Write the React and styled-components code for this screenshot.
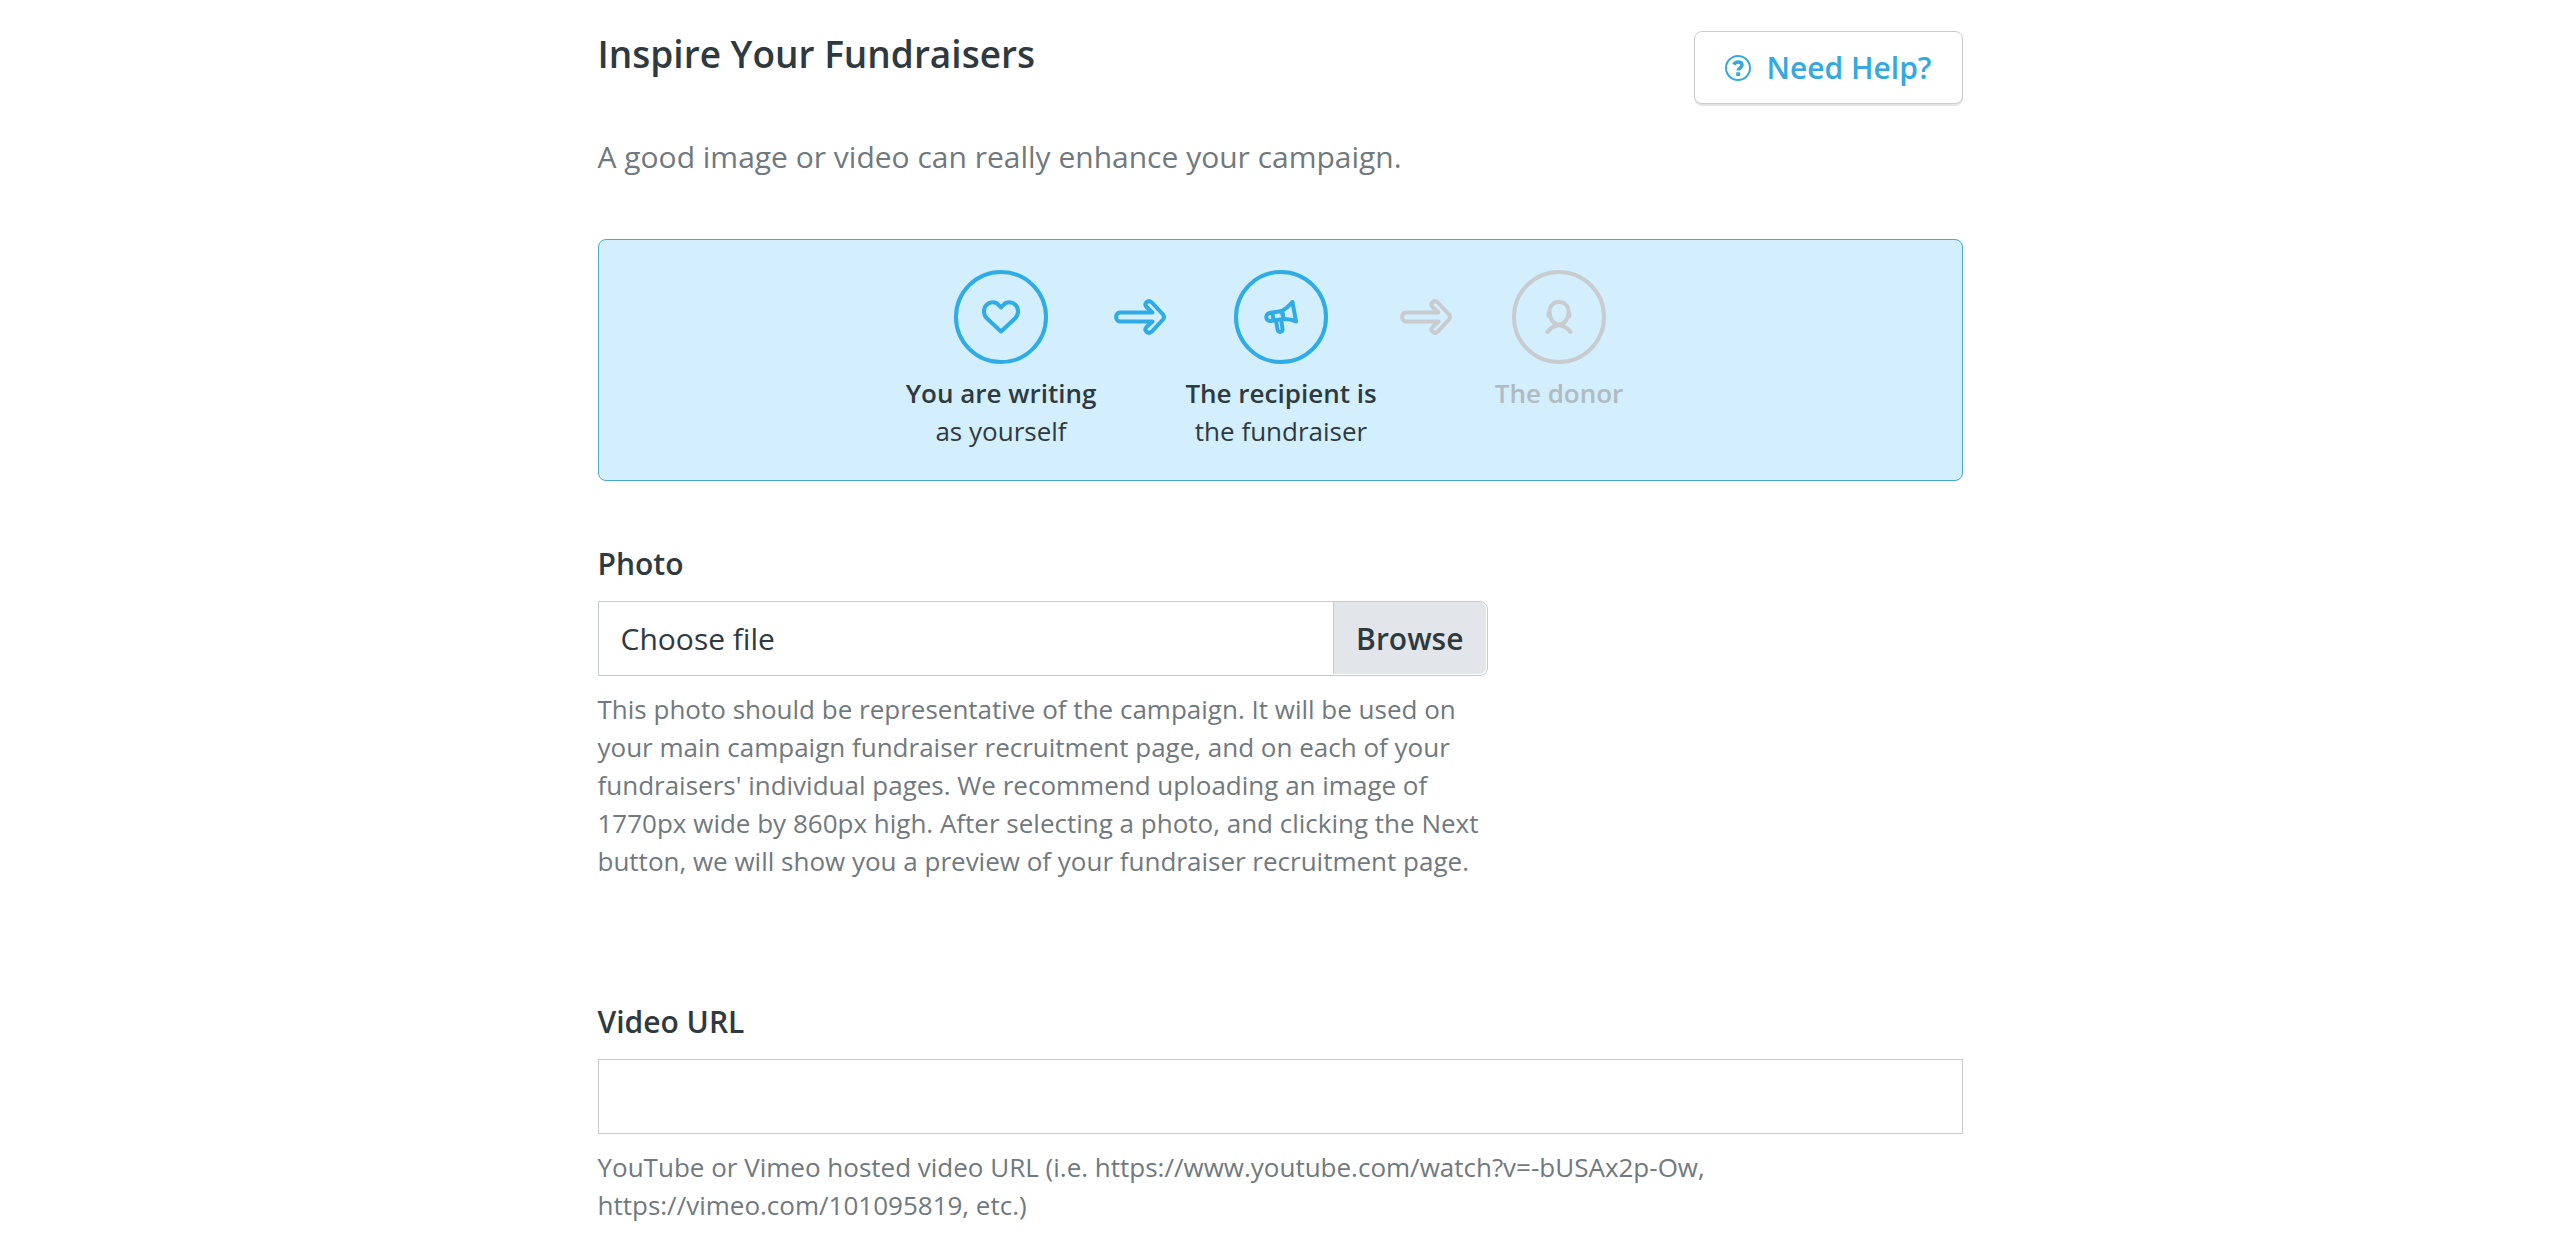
import React from "react";
import styled, { createGlobalStyle } from "styled-components";

const Global = createGlobalStyle`
  *, *::before, *::after { box-sizing: border-box; }
  body {
    margin: 0;
    background: #fff;
    color: #2e3a40;
    font-family: "Open Sans", "Noto Sans", sans-serif;
    font-size: 30px;
    line-height: 45px;
  }
`;

const Page = styled.main`
  max-width: 1365px;
  margin: 0 auto;
  padding: 31px 0 12px;
`;

const Header = styled.header`
  display: flex;
  justify-content: space-between;
  align-items: flex-start;
`;

const Title = styled.h1`
  margin: 0;
  font-size: 37px;
  line-height: 45px;
  font-weight: 600;
`;

const HelpButton = styled.button`
  display: flex;
  align-items: center;
  gap: 15px;
  height: 73px;
  padding: 0 30px;
  border: 1px solid #ccc;
  border-radius: 8px;
  background: #fff;
  box-shadow: 0 2px 0 #e5e5e5;
  color: #33a9e0;
  font: inherit;
  font-weight: 600;
  cursor: pointer;
`;

const Lead = styled.p`
  margin: 30px 0 60px;
  color: #70797d;
`;

const Flow = styled.section`
  display: grid;
  grid-template-columns: 210px 70px 210px 68px 210px;
  justify-content: center;
  padding: 30px 0;
  border: 1px solid #4ba9cc;
  border-radius: 8px;
  background: #d3eefc;
`;

const Step = styled.div`
  display: flex;
  flex-direction: column;
  align-items: center;
  font-size: 26px;
  line-height: 38px;
  text-align: center;
  color: ${(p) => (p.$muted ? "#b0bbc0" : "#2e3a40")};
`;

const Circle = styled.span`
  display: flex;
  align-items: center;
  justify-content: center;
  width: 94px;
  height: 94px;
  margin-bottom: 10px;
  border: 4px solid currentColor;
  border-radius: 50%;
  color: ${(p) => (p.$muted ? "#c8cccf" : "#2fabe6")};
`;

const Strong = styled.strong`
  font-weight: 600;
`;

const ArrowCell = styled.div`
  display: flex;
  align-items: center;
  justify-content: ${(p) => (p.$muted ? "flex-end" : "center")};
  height: 94px;
  padding-right: 2px;
  color: ${(p) => (p.$muted ? "#c8cccf" : "#2fabe6")};
`;

const Field = styled.div`
  width: ${(p) => p.$width || "100%"};
  max-width: 100%;
  margin-top: ${(p) => p.$space}px;
`;

const Label = styled.label`
  display: block;
  margin-bottom: 15px;
  font-weight: 600;
`;

const FileBox = styled.div`
  position: relative;
  display: flex;
  height: 75px;
  padding: 0 1px 1px 0;
  border: 1px solid #c5ccd0;
  border-radius: 0 8px 8px 0;
`;

const FileInput = styled.input`
  position: absolute;
  inset: 0;
  width: 100%;
  height: 100%;
  opacity: 0;
  cursor: pointer;
`;

const FileName = styled.span`
  flex: 1;
  padding: 14px 22px;
`;

const Browse = styled.span`
  padding: 14px 22px;
  border-left: 1px solid #c5ccd0;
  border-radius: 0 7px 7px 0;
  background: #e2e6ea;
  font-weight: 600;
`;

const TextInput = styled.input`
  display: block;
  width: 100%;
  height: 75px;
  padding: 0 22px;
  border: 1px solid #ccc;
  border-radius: 0;
  background: #fff;
  color: inherit;
  font: inherit;
`;

const Hint = styled.p`
  max-width: ${(p) => p.$max || "none"};
  margin: 14px 0 0;
  color: #70797d;
  font-size: 26px;
  line-height: 38px;
`;

const HelpIcon = () => (
  <svg width="26" height="26" viewBox="0 0 26 26" fill="none" stroke="currentColor" aria-hidden="true">
    <circle cx="13" cy="13" r="12" strokeWidth="2" />
    <path d="M8.8 9.6C9.700 7.800 11 7 13 7c2.300 0 4 1.200 4 3.200 0 2.800-3.800 2.700-3.800 5.300" strokeWidth="3.600" />
    <path d="M13.200 17.300v3.700" strokeWidth="4" />
  </svg>
);

const HeartIcon = () => (
  <svg width="38" height="34" viewBox="0 0 38 34" fill="none" stroke="currentColor" strokeWidth="4" strokeLinejoin="round" aria-hidden="true">
    <path d="M19 31.500 4.800 18.200C1 14.500 1 8 4.600 4.700 8.300 1.200 13.500 1.500 16.500 4.800L19 7.500l2.500-2.700c3-3.300 8.200-3.600 11.900-.1C37 8 37 14.500 33.200 18.200Z" />
  </svg>
);

const MegaphoneIcon = () => (
  <svg width="34" height="34" viewBox="0 0 34 34" fill="none" stroke="currentColor" strokeWidth="4" strokeLinejoin="round" aria-hidden="true">
    <path d="M18 11c4.500-2.500 7.500-5.500 10.500-9l3.500 19.500c-4-2-8-2.500-12.500-2.500Z" />
    <path d="M18 11 8.500 12.500l1 8 10-1.500ZM8.500 12.500l-3 .5C.8 14 1.500 21.500 6.500 21l3-.5" />
    <path d="m12 21 1.600 8.500c.6 3.500 5.400 3 4.900-.5L17.200 20" />
  </svg>
);

const PersonIcon = () => (
  <svg width="28" height="34" viewBox="0 0 28 34" fill="none" stroke="currentColor" strokeWidth="4" strokeLinecap="round" aria-hidden="true">
    <path d="M14 2c-6 0-9.500 4-9.500 10S8 24.500 14 24.500s9.500-6.500 9.500-12.500S20 2 14 2Z" />
    <path d="M3.500 14v2M24.500 14v2M2.500 32c2.500-3.500 6.500-6 11.500-7 5 1 9 3.500 11.500 7" />
  </svg>
);

const ArrowIcon = () => (
  <svg width="52" height="36" viewBox="0 0 52 36" fill="none" stroke="currentColor" strokeWidth="4" strokeLinejoin="round" aria-hidden="true">
    <path d="M6 13.500H38.500L32.500 8C29.500 4.500 34 .3 37.500 3.200L49 15.500q2 2.500 0 5L37.500 32.800C34 35.700 29.500 31.500 32.500 28L38.500 22.500H6C.8 22.500 .8 13.500 6 13.500Z" />
  </svg>
);

export default function App() {
  return (
    <>
      <Global />
      <Page>
        <Header>
          <Title>Inspire Your Fundraisers</Title>
          <HelpButton type="button">
            <HelpIcon />
            Need Help?
          </HelpButton>
        </Header>
        <Lead>A good image or video can really enhance your campaign.</Lead>
        <Flow>
          <Step>
            <Circle><HeartIcon /></Circle>
            <Strong>You are writing</Strong>
            <span>as yourself</span>
          </Step>
          <ArrowCell><ArrowIcon /></ArrowCell>
          <Step>
            <Circle><MegaphoneIcon /></Circle>
            <Strong>The recipient is</Strong>
            <span>the fundraiser</span>
          </Step>
          <ArrowCell $muted><ArrowIcon /></ArrowCell>
          <Step $muted>
            <Circle $muted><PersonIcon /></Circle>
            <Strong>The donor</Strong>
          </Step>
        </Flow>
        <Field $width="890px" $space={60}>
          <Label htmlFor="photo">Photo</Label>
          <FileBox>
            <FileName>Choose file</FileName>
            <Browse>Browse</Browse>
            <FileInput id="photo" type="file" accept="image/*" />
          </FileBox>
          <Hint>
            This photo should be representative of the campaign. It will be used on your main
            campaign fundraiser recruitment page, and on each of your fundraisers' individual
            pages. We recommend uploading an image of 1770px wide by 860px high. After selecting a
            photo, and clicking the Next button, we will show you a preview of your fundraiser
            recruitment page.
          </Hint>
        </Field>
        <Field $space={119}>
          <Label htmlFor="video-url">Video URL</Label>
          <TextInput id="video-url" type="url" />
          <Hint $max="1200px">
            YouTube or Vimeo hosted video URL (i.e. https://www.youtube.com/watch?v=-bUSAx2p-Ow,
            https://vimeo.com/101095819, etc.)
          </Hint>
        </Field>
      </Page>
    </>
  );
}
